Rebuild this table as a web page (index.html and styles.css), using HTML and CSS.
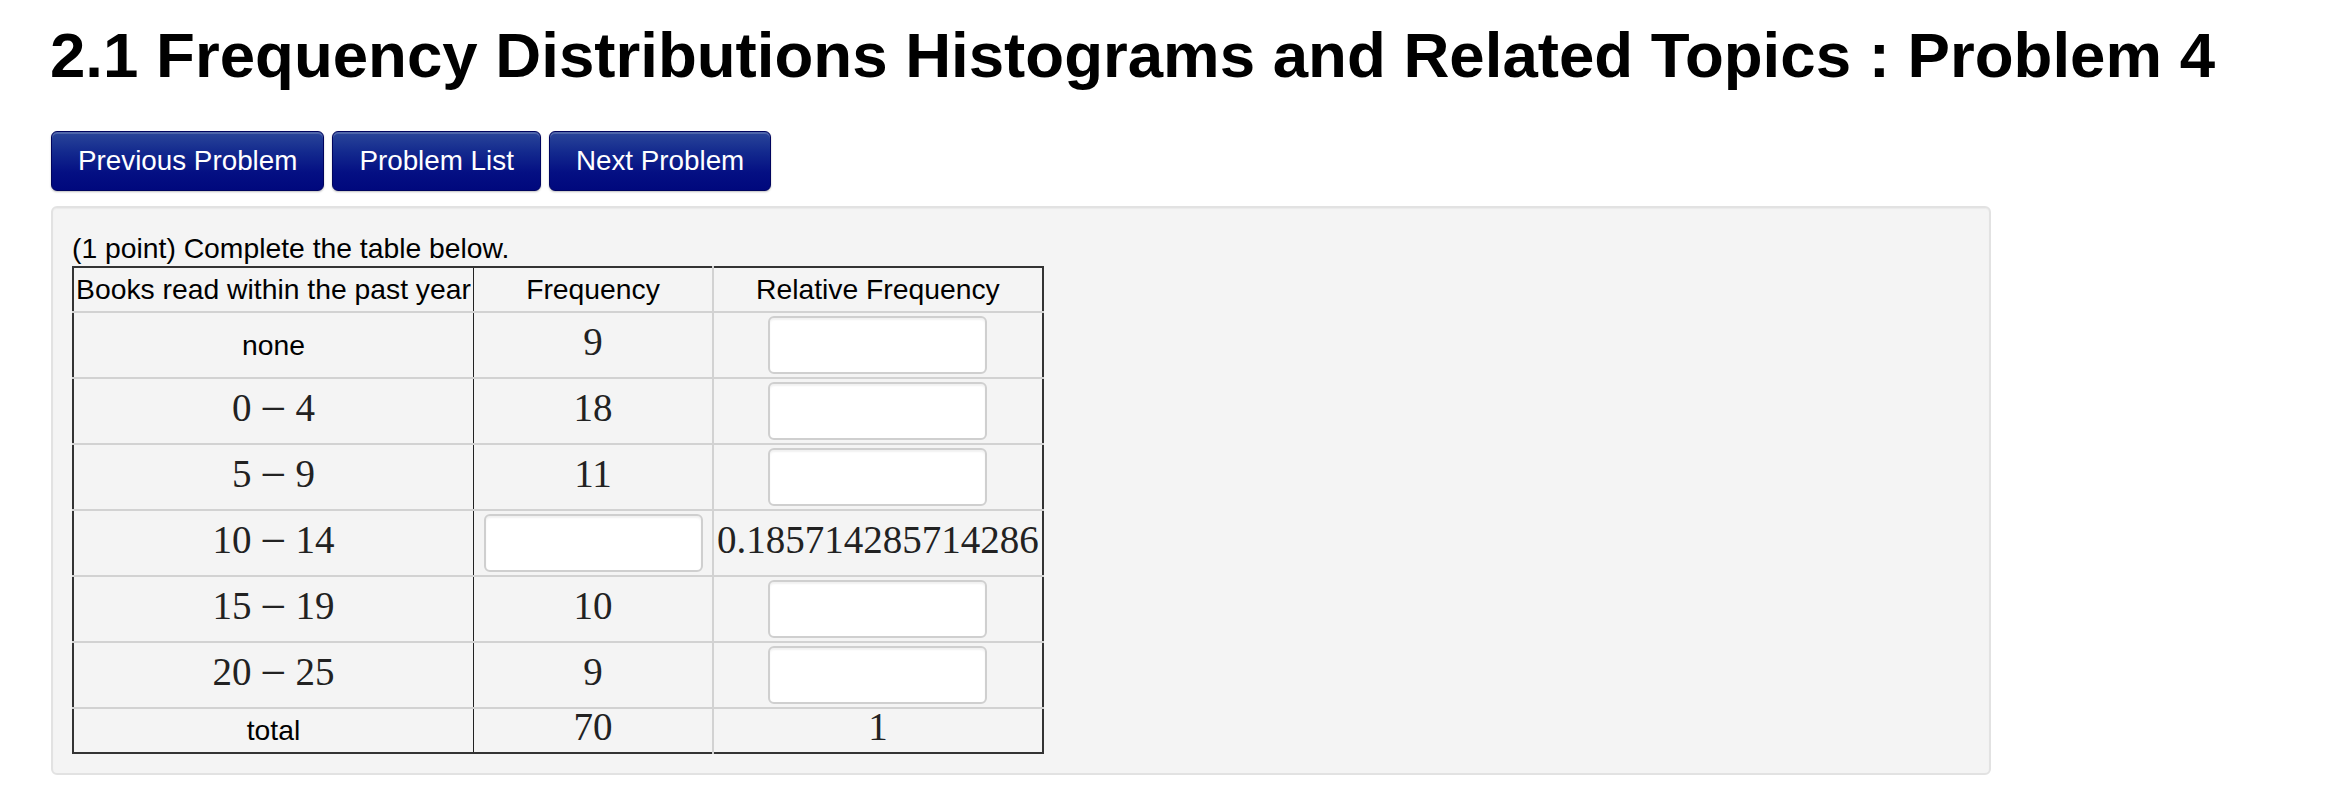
FILE: index.html
```html
<!DOCTYPE html>
<html lang="en">
<head>
<meta charset="utf-8">
<title>2.1 Frequency Distributions Histograms and Related Topics : Problem 4</title>
<link rel="stylesheet" href="styles.css">
</head>
<body>
<div class="page">
  <h1 class="title">2.1 Frequency Distributions Histograms and Related Topics : Problem 4</h1>
  <div class="nav">
    <button class="nav-btn" type="button">Previous Problem</button>
    <button class="nav-btn" type="button">Problem List</button>
    <button class="nav-btn" type="button">Next Problem</button>
  </div>
  <div class="panel">
    <div class="prompt">(1 point) Complete the table below.</div>
    <table class="freq">
      <tr class="short">
        <td class="c1">Books read within the past year</td>
        <td class="c2">Frequency</td>
        <td class="c3">Relative Frequency</td>
      </tr>
      <tr>
        <td class="c1">none</td>
        <td class="c2"><span class="math">9</span></td>
        <td class="c3"><input class="ans" type="text"></td>
      </tr>
      <tr>
        <td class="c1"><span class="math">0<span class="minus">−</span>4</span></td>
        <td class="c2"><span class="math">18</span></td>
        <td class="c3"><input class="ans" type="text"></td>
      </tr>
      <tr>
        <td class="c1"><span class="math">5<span class="minus">−</span>9</span></td>
        <td class="c2"><span class="math">11</span></td>
        <td class="c3"><input class="ans" type="text"></td>
      </tr>
      <tr>
        <td class="c1"><span class="math">10<span class="minus">−</span>14</span></td>
        <td class="c2"><input class="ans" type="text"></td>
        <td class="c3"><span class="math">0.185714285714286</span></td>
      </tr>
      <tr>
        <td class="c1"><span class="math">15<span class="minus">−</span>19</span></td>
        <td class="c2"><span class="math">10</span></td>
        <td class="c3"><input class="ans" type="text"></td>
      </tr>
      <tr>
        <td class="c1"><span class="math">20<span class="minus">−</span>25</span></td>
        <td class="c2"><span class="math">9</span></td>
        <td class="c3"><input class="ans" type="text"></td>
      </tr>
      <tr class="short">
        <td class="c1">total</td>
        <td class="c2"><span class="math">70</span></td>
        <td class="c3"><span class="math">1</span></td>
      </tr>
    </table>
  </div>
</div>
</body>
</html>
```

FILE: styles.css
```css
html, body {
  margin: 0;
  padding: 0;
  background: #ffffff;
}

body {
  font-family: "Liberation Sans", Arial, Helvetica, sans-serif;
  color: #000;
}

.page {
  padding: 0 0 0 51px;
}

.title {
  margin: 17px 0 0 -1px;
  font-size: 63.6px;
  line-height: 75px;
  font-weight: bold;
  color: #000;
}

.nav {
  display: flex;
  gap: 8px;
  margin-top: 39px;
}

.nav-btn {
  font-family: "Liberation Sans", Arial, Helvetica, sans-serif;
  font-size: 27.8px;
  line-height: 32px;
  color: #fff;
  padding: 13px 26px;
  border: 1px solid #00045e;
  border-radius: 6px;
  background: linear-gradient(to bottom, #2a4699 0%, #13298e 35%, #040f83 70%, #00087d 100%);
  box-shadow: inset 0 2px 0 rgba(255,255,255,0.18), 0 1px 2px rgba(0,0,0,0.25);
  cursor: pointer;
}

.panel {
  box-sizing: border-box;
  width: 1940px;
  margin-top: 15px;
  padding: 22px 19px 19px 19px;
  background: #f4f4f4;
  border: 2px solid #e2e2e2;
  border-radius: 6px;
  box-shadow: inset 0 1px 1px rgba(0,0,0,0.04);
}

.prompt {
  font-size: 28.3px;
  line-height: 36px;
}

.freq {
  border-collapse: collapse;
  border: 2px solid #333;
  font-size: 28.3px;
  line-height: 37px;
}

.freq td {
  padding: 3px 4px;
  text-align: center;
  vertical-align: middle;
  white-space: nowrap;
  border-top: 2px solid #d2d2d2;
  border-left: 2px solid #d2d2d2;
}

.freq tr:first-child td {
  border-top: none;
}

.freq td.c1 {
  border-left: none;
  border-right: 1px solid #222;
  width: 395px;
  padding-left: 2px;
  padding-right: 2px;
}

.freq td.c2 {
  border-left: 1px solid #222;
  width: 230px;
}

.freq td.c3 {
  width: 320px;
  padding-left: 3px;
  padding-right: 3px;
}

.math {
  font-family: "Liberation Serif", "Times New Roman", serif;
  font-size: 39px;
  line-height: 30px;
  color: #222;
}

.minus {
  font-size: 46px;
  vertical-align: -3px;
  margin: 0 9px;
}

.ans {
  display: block;
  box-sizing: border-box;
  width: 219px;
  height: 58px;
  margin: 0 auto;
  padding: 4px 8px;
  border: 2px solid #cfcfcf;
  border-radius: 6px;
  background: #fff;
  box-shadow: inset 0 2px 2px rgba(0,0,0,0.06);
  font-size: 24px;
}
```
